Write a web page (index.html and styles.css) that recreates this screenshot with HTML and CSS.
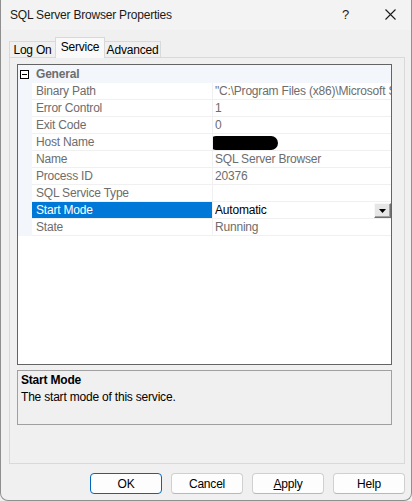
FILE: index.html
```html
<!DOCTYPE html>
<html>
<head>
<meta charset="utf-8">
<title>SQL Server Browser Properties</title>
<link rel="stylesheet" href="styles.css">
</head>
<body>
<div class="window">
  <div class="titlebar">
    <span class="title">SQL Server Browser Properties</span>
    <span class="help">?</span>
    <span class="close"><svg width="11" height="11" viewBox="0 0 11 11"><path d="M0.5 0.5 L10.5 10.5 M10.5 0.5 L0.5 10.5" stroke="#1a1a1a" stroke-width="1.1" fill="none"/></svg></span>
  </div>
  <div class="tabs">
    <div class="tab tab-logon">Log On</div>
    <div class="tab tab-service active">Service</div>
    <div class="tab tab-adv">Advanced</div>
  </div>
  <div class="panel">
    <div class="grid">
      <div class="row cat">
        <span class="gutter"><span class="minus"></span></span>
        <span class="catname">General</span>
      </div>
      <div class="row"><span class="gutter"></span><span class="name">Binary Path</span><span class="value"><span class="clip">"C:\Program Files (x86)\Microsoft SQL Server\90\Shared\sqlbrowser.exe"</span></span></div>
      <div class="row"><span class="gutter"></span><span class="name">Error Control</span><span class="value">1</span></div>
      <div class="row"><span class="gutter"></span><span class="name">Exit Code</span><span class="value">0</span></div>
      <div class="row"><span class="gutter"></span><span class="name">Host Name</span><span class="value"><span class="redact"></span></span></div>
      <div class="row"><span class="gutter"></span><span class="name">Name</span><span class="value">SQL Server Browser</span></div>
      <div class="row"><span class="gutter"></span><span class="name">Process ID</span><span class="value">20376</span></div>
      <div class="row"><span class="gutter"></span><span class="name">SQL Service Type</span><span class="value"></span></div>
      <div class="row selected"><span class="gutter"></span><span class="name">Start Mode</span><span class="value editable"><span class="vtext">Automatic</span><span class="dropbtn"><svg width="7" height="4" viewBox="0 0 7 4"><path d="M0 0 H7 L3.5 4 Z" fill="#000"/></svg></span></span></div>
      <div class="row"><span class="gutter"></span><span class="name">State</span><span class="value">Running</span></div>
    </div>
    <div class="desc">
      <div class="desc-title">Start Mode</div>
      <div class="desc-text">The start mode of this service.</div>
    </div>
  </div>
  <div class="buttons">
    <button class="btn default">OK</button>
    <button class="btn">Cancel</button>
    <button class="btn"><u>A</u>pply</button>
    <button class="btn">Help</button>
  </div>
</div>
</body>
</html>
```

FILE: styles.css
```css
* { box-sizing: border-box; }
html, body { margin: 0; padding: 0; }
body {
  background: #f0f0f0;
  font-family: "Liberation Sans", Arial, sans-serif;
  font-size: 12px;
  letter-spacing: -0.2px;
  color: #000;
}
.window {
  width: 412px;
  height: 501px;
  border: 1px solid #8f8f8f;
  border-top: none;
  border-radius: 0 0 8px 8px;
  background: #f0f0f0;
  display: flex;
  flex-direction: column;
  overflow: hidden;
}
.titlebar {
  height: 30px;
  background: #f3f3f3;
  display: flex;
  align-items: center;
  padding-left: 9px;
  flex-shrink: 0;
}
.title { flex: 1; color: #1a1a1a; }
.help {
  font-size: 13px;
  color: #1a1a1a;
  margin-right: 36px;
  margin-top: -1px;
}
.close {
  display: flex;
  margin-right: 15px;
  margin-top: -1px;
}
.tabs {
  height: 27px;
  display: flex;
  align-items: flex-end;
  padding-left: 8px;
  flex-shrink: 0;
}
.tab {
  height: 16px;
  border: 1px solid #d9d9d9;
  border-bottom: none;
  background: #f0f0f0;
  display: flex;
  align-items: center;
  justify-content: center;
  color: #000;
  padding-top: 1px;
}
.tab-logon { width: 46px; border-right: none; }
.tab-service { width: 50px; }
.tab-adv { width: 56px; border-left: none; }
.tab.active {
  height: 21px;
  margin-bottom: -1px;
  background: #f9f9f9;
  position: relative;
  z-index: 1;
  padding-top: 0;
  padding-bottom: 3px;
}
.panel {
  margin-left: 8px;
  width: 396px;
  height: 407px;
  border: 1px solid #d9d9d9;
  background: #f0f0f0;
  padding: 6px 0 0 7px;
  flex-shrink: 0;
}
.grid {
  width: 375px;
  height: 301px;
  border: 1px solid #646464;
  background: #fff;
  overflow: hidden;
}
.row {
  display: flex;
  height: 17px;
  color: #6d6d6d;
}
.row.cat {
  height: 18px;
  background: #f3f6fb;
}
.gutter {
  width: 14px;
  flex-shrink: 0;
  background: #f3f6fb;
  display: flex;
  align-items: center;
  padding-left: 2px;
}
.minus {
  width: 9px;
  height: 9px;
  border: 1px solid #000;
  background: #fff;
  display: flex;
  align-items: center;
  justify-content: center;
  margin-top: 1px;
}
.minus::before {
  content: "";
  width: 5px;
  height: 1px;
  background: #000;
}
.catname {
  padding-left: 4px;
  font-weight: bold;
  color: #6d6d6d;
  display: flex;
  align-items: center;
}
.name {
  width: 181px;
  flex-shrink: 0;
  padding-left: 4px;
  border-right: 1px solid #f0f0f0;
  border-bottom: 1px solid #f0f0f0;
  display: flex;
  align-items: center;
  white-space: nowrap;
}
.value {
  flex: 1;
  min-width: 0;
  padding-left: 2px;
  border-bottom: 1px solid #f0f0f0;
  display: flex;
  align-items: center;
  white-space: nowrap;
  overflow: hidden;
}
.clip {
  display: block;
  overflow: hidden;
  white-space: nowrap;
  text-overflow: clip;
  min-width: 0;
}
.redact {
  display: inline-block;
  width: 69px;
  height: 14px;
  border-radius: 7px;
  background: #000;
  margin-left: -6px;
  margin-top: 1px;
}
.row.selected .name {
  background: #0078d7;
  color: #fff;
}
.value.editable { color: #000; }
.vtext { flex: 1; }
.dropbtn {
  width: 17px;
  height: 15px;
  margin-top: 1px;
  background: #e6e6e6;
  border: 1px solid #f8f8f8;
  border-right-color: #707070;
  border-bottom-color: #707070;
  box-shadow: inset -1px -1px 0 #a0a0a0;
  display: flex;
  align-items: center;
  justify-content: center;
  flex-shrink: 0;
}
.desc {
  margin-top: 5px;
  width: 375px;
  height: 55px;
  border: 1px solid #a0a0a0;
  background: #f0f0f0;
  padding: 1px 0 0 3px;
  line-height: 17px;
}
.desc-title { font-weight: bold; }
.buttons {
  margin-top: 9px;
  display: flex;
  justify-content: flex-end;
  gap: 9px;
  padding-right: 6px;
}
.btn {
  width: 72px;
  height: 21px;
  border: 1px solid #d0d0d0;
  border-bottom-color: #b8b8b8;
  border-radius: 4px;
  background: #fdfdfd;
  font-family: inherit;
  font-size: 12px;
  letter-spacing: -0.2px;
  color: #000;
  padding: 0;
}
.btn.default {
  border: 1px solid #0067c0;
}
```
